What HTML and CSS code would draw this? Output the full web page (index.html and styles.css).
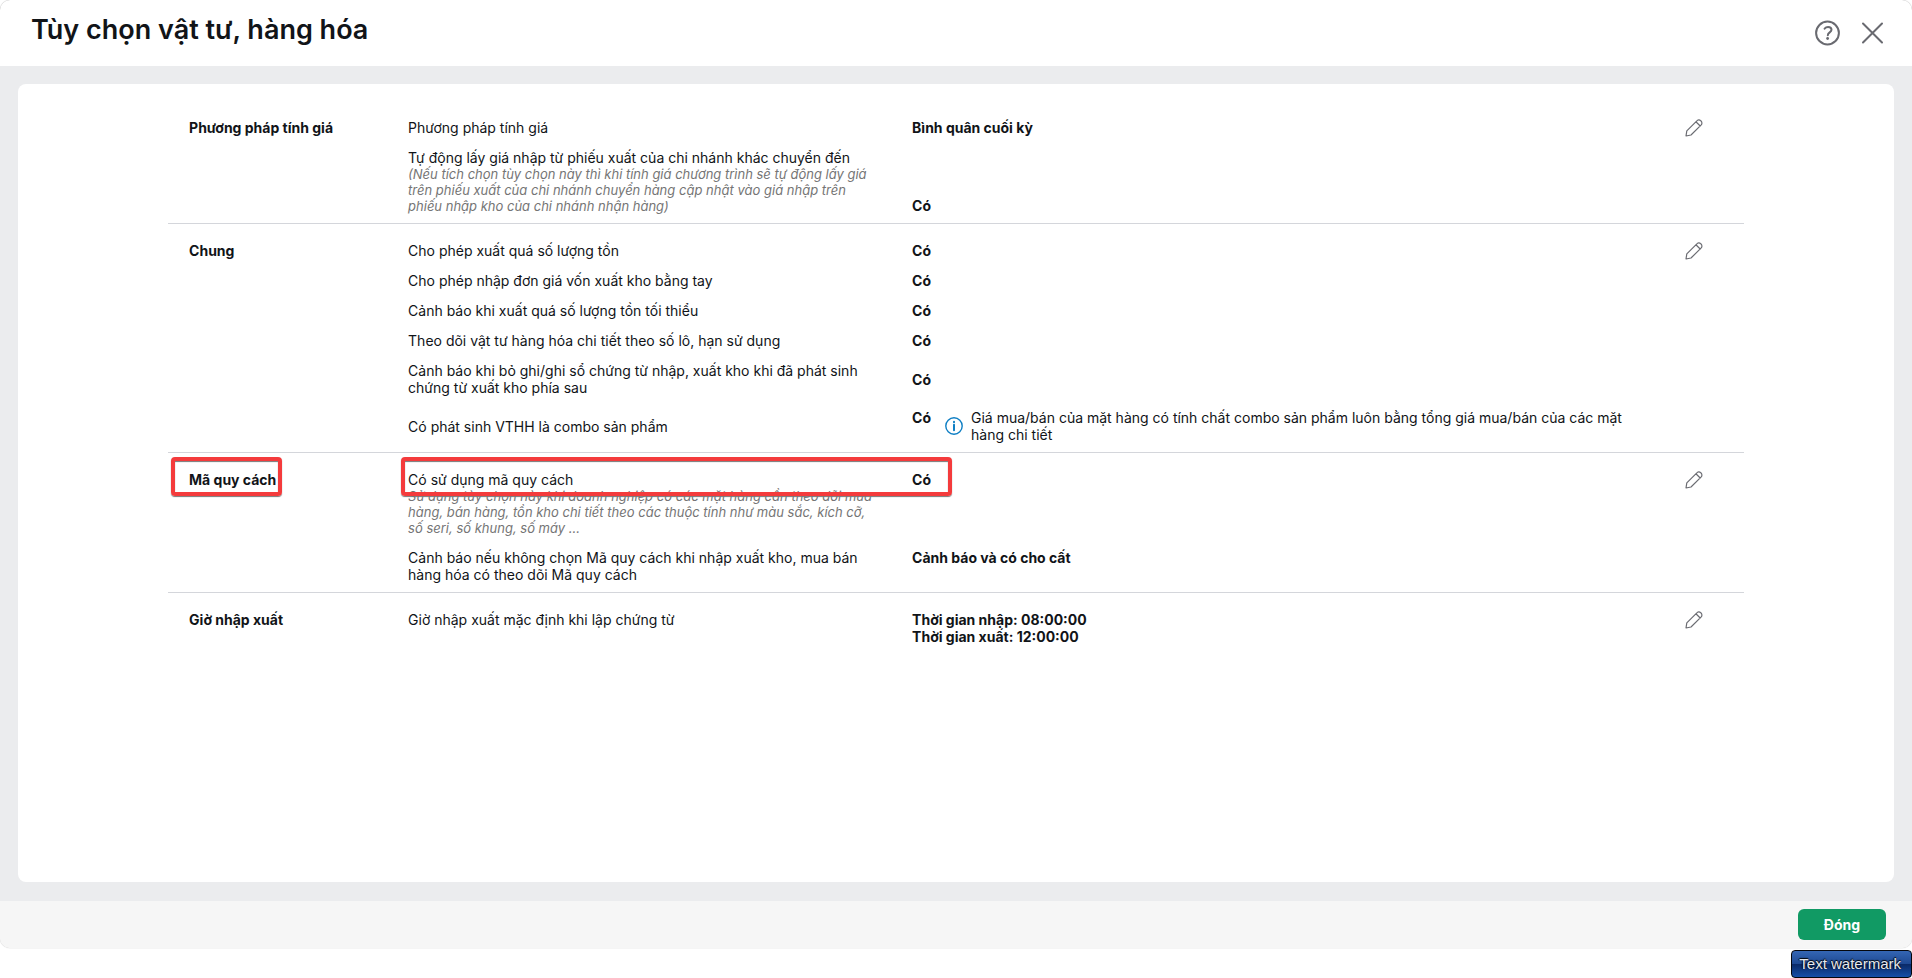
FILE: index.html
```
<!DOCTYPE html>
<html lang="vi">
<head>
    <meta charset="UTF-8">
    <meta name="viewport" content="width=device-width, initial-scale=1.0">
    <title>Tùy chọn vật tư, hàng hóa</title>
    <link rel="stylesheet" href="styles.css">
</head>
<body>
    <!-- pencil icon shared by all sections -->
    <svg class="symbols" aria-hidden="true">
        <symbol id="pencil" viewBox="0 0 18 18">
            <path d="M1 17 L1.8 11.9 L11.6 2.1 C12.8 0.6 14.6 0.6 15.8 1.8 C17.2 3.1 17.3 4.9 16 6.2 L6 16 Z M10.9 2.8 L15.2 7"/>
        </symbol>
    </svg>

    <div class="popup">
        <header class="popup-header">
            <h1>Tùy chọn vật tư, hàng hóa</h1>
            <div class="header-actions">
                <button type="button" class="icon-btn" aria-label="Trợ giúp">
                    <svg width="26" height="26" viewBox="0 0 26 26">
                        <circle cx="12.5" cy="13" r="11.4"/>
                        <path d="M9.6 8.6 C10.4 7.6 11.6 7 13.1 7 C15.2 7 16.5 8.1 16.5 9.8 C16.5 12.4 12.8 12.4 12.8 15.2"/>
                        <circle class="dot" cx="12.6" cy="18.5" r="1.4"/>
                    </svg>
                </button>
                <button type="button" class="icon-btn" aria-label="Đóng cửa sổ">
                    <svg width="26" height="26" viewBox="0 0 26 26">
                        <path d="M3 3.5 L22 22.5 M22 3.5 L3 22.5"/>
                    </svg>
                </button>
            </div>
        </header>

        <main class="popup-body">
            <div class="card">
                <section class="group">
                    <h2>Phương pháp tính giá</h2>
                    <div class="rows">
                        <div class="row">
                            <div class="name">Phương pháp tính giá</div>
                            <div class="value">Bình quân cuối kỳ</div>
                        </div>
                        <div class="row row-bottom">
                            <div class="name">
                                Tự động lấy giá nhập từ phiếu xuất của chi nhánh khác chuyển đến
                                <p class="note">(Nếu tích chọn tùy chọn này thì khi tính giá chương trình sẽ tự động lấy giá trên phiếu xuất của chi nhánh chuyển hàng cập nhật vào giá nhập trên phiếu nhập kho của chi nhánh nhận hàng)</p>
                            </div>
                            <div class="value">Có</div>
                        </div>
                    </div>
                    <button type="button" class="edit-btn" aria-label="Sửa"><svg width="18" height="18"><use href="#pencil"/></svg></button>
                </section>

                <section class="group">
                    <h2>Chung</h2>
                    <div class="rows">
                        <div class="row">
                            <div class="name">Cho phép xuất quá số lượng tồn</div>
                            <div class="value">Có</div>
                        </div>
                        <div class="row">
                            <div class="name">Cho phép nhập đơn giá vốn xuất kho bằng tay</div>
                            <div class="value">Có</div>
                        </div>
                        <div class="row">
                            <div class="name">Cảnh báo khi xuất quá số lượng tồn tối thiểu</div>
                            <div class="value">Có</div>
                        </div>
                        <div class="row">
                            <div class="name">Theo dõi vật tư hàng hóa chi tiết theo số lô, hạn sử dụng</div>
                            <div class="value">Có</div>
                        </div>
                        <div class="row row-middle">
                            <div class="name">Cảnh báo khi bỏ ghi/ghi sổ chứng từ nhập, xuất kho khi đã phát sinh chứng từ xuất kho phía sau</div>
                            <div class="value">Có</div>
                        </div>
                        <div class="row row-middle">
                            <div class="name">Có phát sinh VTHH là combo sản phẩm</div>
                            <div class="value value-info">
                                <span>Có</span>
                                <svg class="info" width="18" height="18" viewBox="0 0 18 18">
                                    <circle cx="9" cy="9" r="8.2"/>
                                    <path class="info-i" d="M9 7.8 V13.2 M9 4.8 V5.2"/>
                                </svg>
                                <p>Giá mua/bán của mặt hàng có tính chất combo sản phẩm luôn bằng tổng giá mua/bán của các mặt hàng chi tiết</p>
                            </div>
                        </div>
                    </div>
                    <button type="button" class="edit-btn" aria-label="Sửa"><svg width="18" height="18"><use href="#pencil"/></svg></button>
                </section>

                <section class="group">
                    <h2><span class="mark mark-title">Mã quy cách</span></h2>
                    <div class="rows">
                        <div class="row mark mark-row">
                            <div class="name">
                                Có sử dụng mã quy cách
                                <p class="note">Sử dụng tùy chọn này khi doanh nghiệp có các mặt hàng cần theo dõi mua hàng, bán hàng, tồn kho chi tiết theo các thuộc tính như màu sắc, kích cỡ, số seri, số khung, số máy ...</p>
                            </div>
                            <div class="value">Có</div>
                        </div>
                        <div class="row">
                            <div class="name">Cảnh báo nếu không chọn Mã quy cách khi nhập xuất kho, mua bán hàng hóa có theo dõi Mã quy cách</div>
                            <div class="value">Cảnh báo và có cho cất</div>
                        </div>
                    </div>
                    <button type="button" class="edit-btn" aria-label="Sửa"><svg width="18" height="18"><use href="#pencil"/></svg></button>
                </section>

                <section class="group">
                    <h2>Giờ nhập xuất</h2>
                    <div class="rows">
                        <div class="row">
                            <div class="name">Giờ nhập xuất mặc định khi lập chứng từ</div>
                            <div class="value">Thời gian nhập: 08:00:00<br>Thời gian xuất: 12:00:00</div>
                        </div>
                    </div>
                    <button type="button" class="edit-btn" aria-label="Sửa"><svg width="18" height="18"><use href="#pencil"/></svg></button>
                </section>
            </div>
        </main>

        <footer class="popup-footer">
            <button type="button" class="close-btn">Đóng</button>
        </footer>
    </div>

    <div class="watermark">Text watermark</div>
</body>
</html>
```
FILE: styles.css
```
*,
*::after {
    box-sizing: border-box;
}

body {
    margin: 0;
    min-height: 100vh;
    display: flex;
    flex-direction: column;
    background-color: #fff;
    color: #111418;
    font-family: Inter, "Liberation Sans", sans-serif;
    font-size: 14px;
    line-height: 17px;
}

h1, h2, p {
    margin: 0;
}

button {
    border: none;
    padding: 0;
    background: none;
    font: inherit;
    cursor: pointer;
}

svg {
    display: block;
    fill: none;
    stroke-linecap: round;
    stroke-linejoin: round;
}

.symbols {
    position: absolute;
    width: 0;
    height: 0;
}

.popup {
    flex: 1;
    display: flex;
    flex-direction: column;
    border-radius: 10px;
    overflow: hidden;
    box-shadow: 0 0 1px #999;
}

.popup-header {
    display: flex;
    justify-content: space-between;
    height: 66px;
    padding: 14px 26px 0 31px;
}

h1 {
    font-size: 27px;
    line-height: 32px;
    font-weight: 600;
}

.header-actions {
    display: flex;
    align-items: flex-start;
    gap: 19px;
    padding-top: 6px;
}

.icon-btn svg {
    stroke: #696a70;
    stroke-width: 2;
}

.icon-btn .dot {
    fill: #696a70;
    stroke: none;
}

.popup-body {
    flex: 1;
    display: flex;
    padding: 18px 18px 19px;
    background-color: #ebecee;
}

.card {
    flex: 1;
    padding: 17px 8% 24px;
    border-radius: 8px;
    background-color: #fff;
}

/* one settings group: title, rows, edit button */
.group {
    display: grid;
    grid-template-columns: 219px 1fr 59px;
    padding: 18px 0 9px 21px;
    border-bottom: 1px solid #d4d6db;
}

.group:last-child {
    border-bottom: none;
}

h2 {
    font-size: 14px;
    line-height: 17px;
    font-weight: 700;
}

.rows {
    display: flex;
    flex-direction: column;
    gap: 13px;
}

.row {
    display: grid;
    grid-template-columns: 472px 1fr;
    column-gap: 32px;
}

.row-middle {
    align-items: center;
}

.row-bottom {
    align-items: end;
}

.note {
    color: #757575;
    font-size: 13px;
    line-height: 16px;
    font-style: italic;
}

.value {
    font-weight: 700;
}

.value-info {
    display: flex;
}

.value-info p {
    max-width: 680px;
    margin-left: 8px;
    font-weight: 400;
}

.info {
    flex: none;
    align-self: center;
    margin-left: 14px;
    stroke: #0f7fc4;
    stroke-width: 1.4;
}

.info-i {
    stroke-width: 2;
}

.edit-btn {
    align-self: start;
    width: 18px;
    height: 18px;
}

.edit-btn svg {
    stroke: #6b6c72;
    stroke-width: 1.2;
}

/* red highlight frames */
.mark {
    position: relative;
}

.mark::after {
    content: "";
    position: absolute;
    top: -14px;
    height: 39px;
    border: 4px solid #f43b3c;
    border-radius: 4px;
    box-shadow: 0 1px 1px #777, inset 0 1px 1px #777;
}

.mark-title::after {
    left: -18px;
    right: -6px;
}

.mark-row::after {
    left: -7px;
    width: 551px;
}

.popup-footer {
    display: flex;
    justify-content: flex-end;
    align-items: center;
    height: 47px;
    padding: 0 26px;
    background-color: #f6f6f6;
}

.close-btn {
    width: 88px;
    height: 31px;
    border-radius: 6px;
    background-color: #119a64;
    color: #fff;
    font-weight: 700;
}

.watermark {
    align-self: flex-end;
    height: 28px;
    margin-top: 2px;
    padding: 0 10px 0 7px;
    border: 1px solid #05070d;
    border-radius: 4px;
    background: linear-gradient(#3466b4, #1f4a94 48%, #0a2a68 52%, #164fa8);
    color: #e6e9ee;
    font-family: "Liberation Sans", Arial, sans-serif;
    font-size: 15px;
    line-height: 26px;
    text-shadow: -1px 0 1px #000, 0 -1px 1px #000;
}
```
